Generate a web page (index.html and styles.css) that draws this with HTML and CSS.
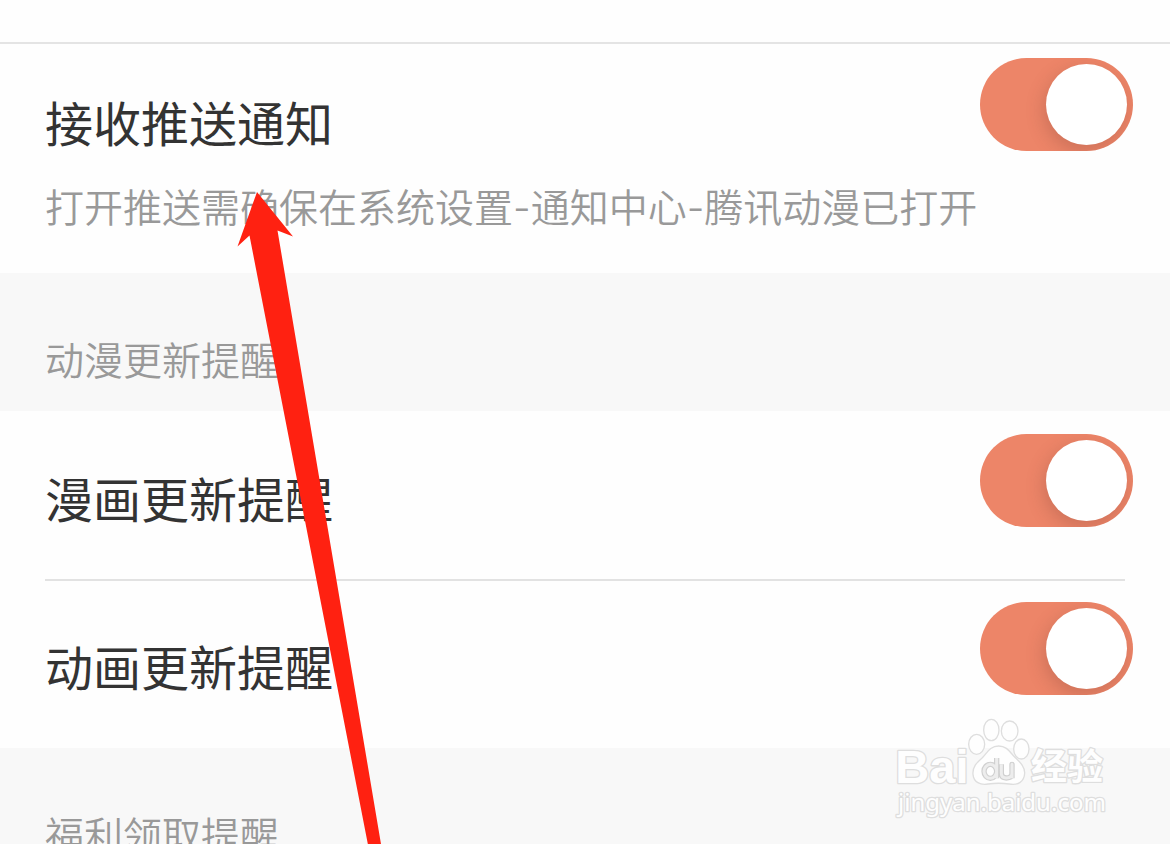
FILE: index.html
```html
<!DOCTYPE html>
<html lang="zh-CN">
<head>
<meta charset="utf-8">
<title>推送设置</title>
<link rel="stylesheet" href="styles.css">
</head>
<body>
<div class="screen">
  <header class="topbar"></header>
  <main>
    <section class="row row-main">
      <div class="row-text">
        <label class="row-title" for="push">接收推送通知</label>
        <p class="row-note">打开推送需确保在系统设置-通知中心-腾讯动漫已打开</p>
      </div>
      <input class="toggle" type="checkbox" id="push" checked>
    </section>
    <h2 class="group">动漫更新提醒</h2>
    <section class="row">
      <label class="row-title" for="comic">漫画更新提醒</label>
      <input class="toggle" type="checkbox" id="comic" checked>
    </section>
    <hr class="divider">
    <section class="row row-last">
      <label class="row-title" for="anime">动画更新提醒</label>
      <input class="toggle" type="checkbox" id="anime" checked>
    </section>
    <h2 class="group">福利领取提醒</h2>
  </main>
  <svg class="arrow" width="160" height="660" viewBox="230 190 160 660" aria-hidden="true">
    <path fill="#ff2111" d="M257 192 293 236.500 277.500 230.500 382 850 369 850 249.500 235.500 237.500 246.500Z"/>
  </svg>
  <svg class="watermark" width="250" height="140" viewBox="0 0 750 420" aria-hidden="true">
    <g class="mark">
      <text x="46" y="249" class="mark-latin">Bai</text>
      <ellipse cx="290" cy="133" rx="24" ry="30"/>
      <ellipse cx="334" cy="90" rx="23" ry="32"/>
      <ellipse cx="389" cy="93" rx="25" ry="30"/>
      <ellipse cx="424" cy="147" rx="23" ry="30"/>
      <path d="M356 138C330 138 321 159 307 173C290 188 277 201 279 223C281 247 301 256 324 252C346 249 366 249 388 252C414 257 433 245 434 220C435 199 419 186 404 171C390 157 381 138 356 138Z"/>
      <path class="mark-line" d="M350 174V235M350 214A19 21 0 1 0 312 214A19 21 0 1 0 350 214M364 193V220Q364 234 379 234Q396 234 396 220V193V235"/>
      <path class="mark-line mark-core" d="M350 174V235M350 214A19 21 0 1 0 312 214A19 21 0 1 0 350 214M364 193V220Q364 234 379 234Q396 234 396 220V193V235"/>
      <text x="453" y="240" class="mark-han">经验</text>
      <text x="54" y="334" class="mark-url">jingyan.baidu.com</text>
    </g>
  </svg>
</div>
</body>
</html>
```
FILE: styles.css
```css
* {
  box-sizing: border-box;
}

body {
  margin: 0;
  background: #fefefe;
  color: #333;
  font-family: Inter, "Noto Sans CJK SC", sans-serif;
}

.screen {
  position: relative;
  height: 100vh;
  overflow: hidden;
}

.topbar {
  height: 44px;
  border-bottom: 2px solid #e4e4e4;
}

.row {
  display: flex;
  justify-content: space-between;
  align-items: flex-start;
  min-height: 168px;
  padding: 23px 37px 0 45px;
}

.row-main {
  min-height: 229px;
  padding-top: 14px;
}

.row-last {
  min-height: 167px;
  padding-top: 21px;
}

.row-title {
  display: block;
  padding-top: 32px;
  font-size: 48px;
  line-height: 70px;
}

.row-note {
  margin: 16px 0 0;
  color: #999;
  font-size: 39px;
  font-weight: 350;
  line-height: 64px;
}

.toggle {
  appearance: none;
  display: flex;
  justify-content: flex-end;
  align-items: center;
  flex: none;
  width: 153px;
  height: 93px;
  margin: 0;
  padding: 0 6px;
  overflow: hidden;
  border-radius: 47px;
  background: #ed8568;
}

.toggle::before {
  content: "";
  width: 81px;
  height: 81px;
  border-radius: 50%;
  background: #fff;
  box-shadow: -2px 6px 18px rgba(120, 60, 50, 0.28);
}

.toggle:not(:checked) {
  justify-content: flex-start;
  background: #ddd;
}

.group {
  height: 138px;
  margin: 0;
  padding: 56px 45px 0;
  background: #f8f8f8;
  color: #999;
  font-size: 39px;
  font-weight: 350;
  line-height: 64px;
}

.divider {
  height: 2px;
  margin: 0 45px;
  border: 0;
  background: #e2e2e2;
}

.arrow {
  position: absolute;
  top: 190px;
  left: 230px;
}

.watermark {
  position: absolute;
  top: 700px;
  right: 40px;
}

.mark {
  fill: #fefefe;
  stroke: #dedede;
  stroke-width: 4px;
  stroke-linejoin: round;
}

.mark text {
  paint-order: stroke;
  stroke-width: 8px;
}

.mark-line {
  fill: none;
  stroke: #d0d0d0;
  stroke-width: 16px;
}

.mark-core {
  stroke: #ededed;
  stroke-width: 9px;
}

.mark-latin {
  font-family: "Liberation Sans", sans-serif;
  font-size: 141px;
  font-weight: 700;
}

.mark-han {
  font-size: 108px;
  font-weight: 700;
}

.mark-url {
  font-family: "Noto Sans", sans-serif;
  font-size: 72px;
}
```
